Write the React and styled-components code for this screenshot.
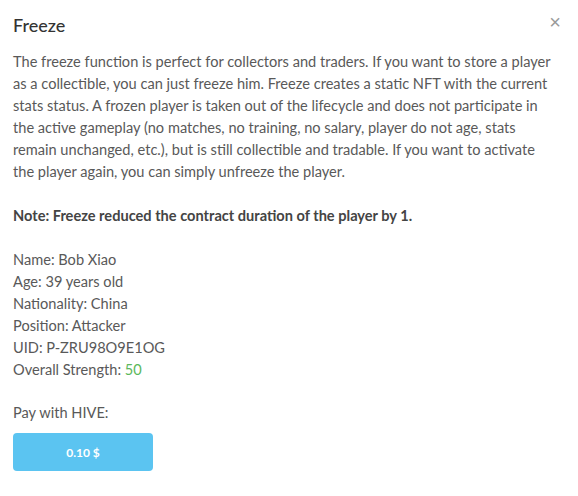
import React from 'react';
import styled, { createGlobalStyle } from 'styled-components';

const GlobalStyle = createGlobalStyle`
  html, body {
    margin: 0;
    padding: 0;
    background: #ffffff;
  }
  body {
    font-family: 'Lato', 'Open Sans', sans-serif;
  }
`;

const Modal = styled.div`
  width: 578px;
  height: 496px;
  box-sizing: border-box;
  background: #ffffff;
  display: flex;
  flex-direction: column;
`;

const Header = styled.div`
  display: flex;
  justify-content: space-between;
  align-items: flex-start;
  padding: 13px 13px 0 13px;
`;

const Title = styled.h4`
  margin: 0;
  font-size: 18px;
  font-weight: 500;
  line-height: 24px;
  color: #333333;
`;

const Close = styled.button`
  border: none;
  background: none;
  padding: 0;
  margin: 2px 4px 0 0;
  font-size: 20px;
  line-height: 14px;
  color: #9a9a9a;
  cursor: pointer;
  font-family: 'Liberation Sans', sans-serif;
`;

const Body = styled.div`
  padding: 14px 20px 0 13px;
  color: #595959;
  font-size: 14.6px;
  line-height: 22px;
`;

const Paragraph = styled.p`
  margin: 0 0 ${({ $gap }) => $gap ?? 22}px 0;
  font-weight: ${({ $bold }) => ($bold ? 700 : 400)};
  color: ${({ $bold }) => ($bold ? '#444444' : 'inherit')};
`;

const InfoList = styled.div`
  display: flex;
  flex-direction: column;
  margin-bottom: 21px;
`;

const Strength = styled.span`
  color: #5cb85c;
`;

const PayButton = styled.button`
  display: block;
  margin-top: 9px;
  width: 140px;
  height: 38px;
  border: none;
  border-radius: 4px;
  background: #5bc4f1;
  color: #ffffff;
  font-family: inherit;
  font-weight: 700;
  font-size: 12px;
  cursor: pointer;
`;

const info = [
  ['Name', 'Bob Xiao'],
  ['Age', '39 years old'],
  ['Nationality', 'China'],
  ['Position', 'Attacker'],
  ['UID', 'P-ZRU98O9E1OG'],
];

export default function App() {
  return (
    <>
      <GlobalStyle />
      <Modal>
        <Header>
          <Title>Freeze</Title>
          <Close>×</Close>
        </Header>
        <Body>
          <Paragraph>
            The freeze function is perfect for collectors and traders. If you want to store a player
            as a collectible, you can just freeze him. Freeze creates a static NFT with the current
            stats status. A frozen player is taken out of the lifecycle and does not participate in
            the active gameplay (no matches, no training, no salary, player do not age, stats
            remain unchanged, etc.), but is still collectible and tradable. If you want to activate
            the player again, you can simply unfreeze the player.
          </Paragraph>
          <Paragraph $bold>Note: Freeze reduced the contract duration of the player by 1.</Paragraph>
          <InfoList>
            {info.map(([k, v]) => (
              <span key={k}>
                {k}: {v}
              </span>
            ))}
            <span>
              Overall Strength: <Strength>50</Strength>
            </span>
          </InfoList>
          <Paragraph $gap={0}>Pay with HIVE:</Paragraph>
          <PayButton>0.10 $</PayButton>
        </Body>
      </Modal>
    </>
  );
}
